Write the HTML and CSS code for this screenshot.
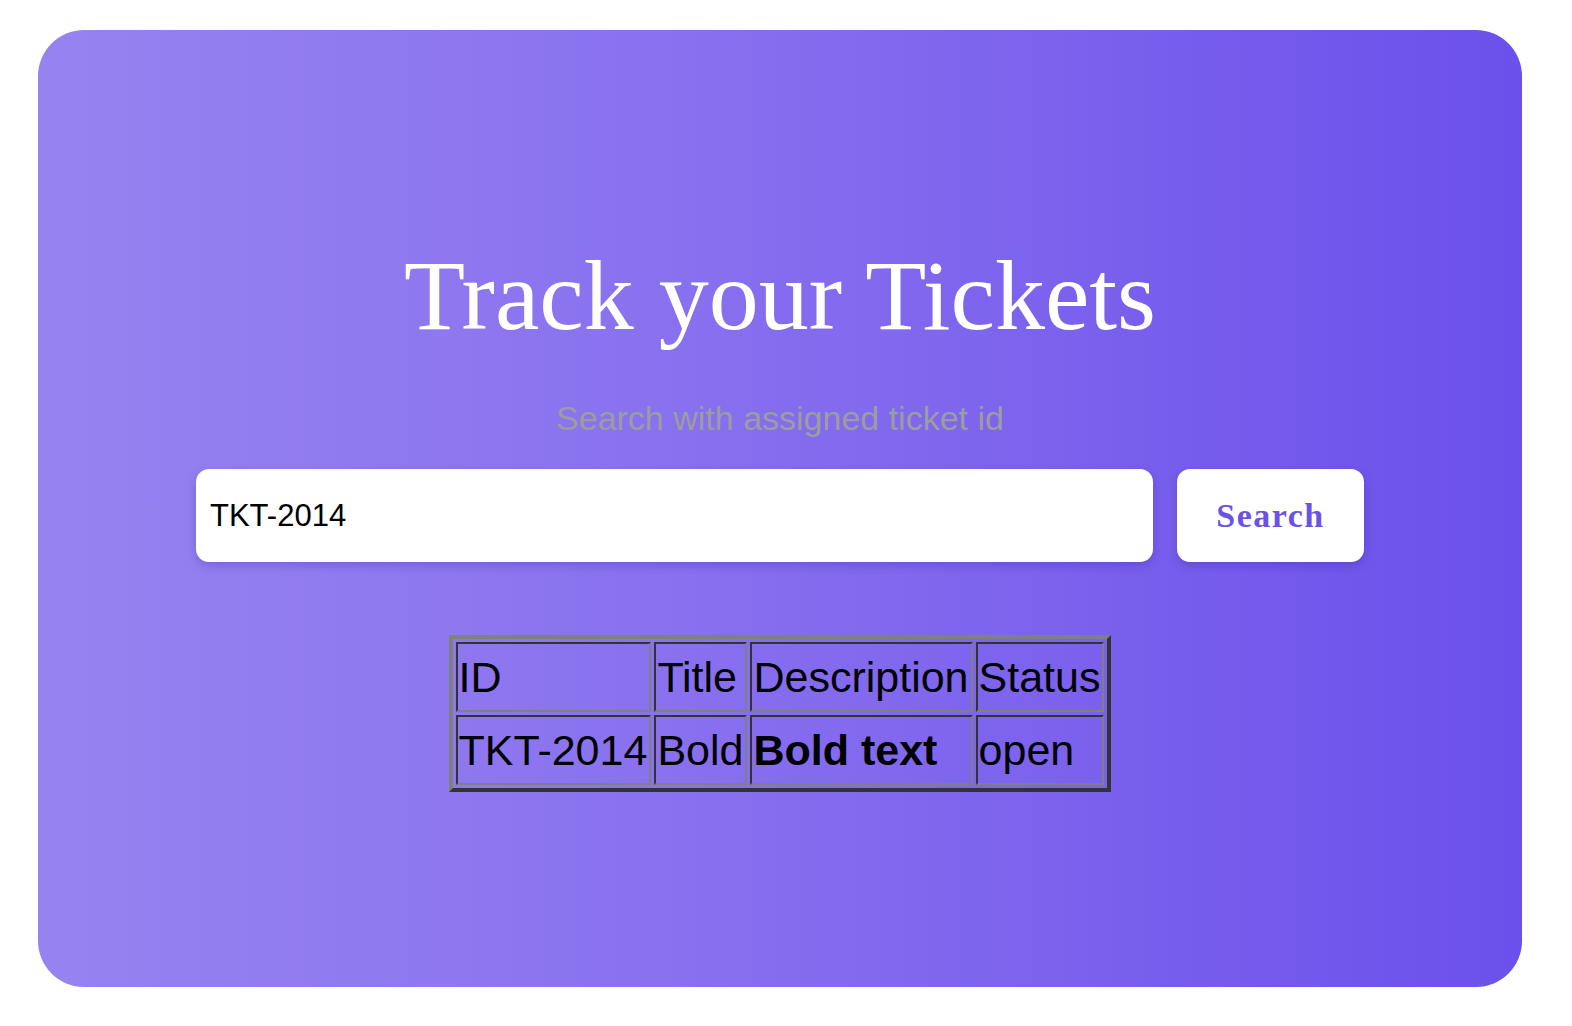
FILE: index.html
```html
<!DOCTYPE html>
<html>
<head>
<meta charset="utf-8">
<title>Track your Tickets</title>
<link rel="stylesheet" href="styles.css">
</head>
<body>
<div class="card">
  <h1 class="title">Track your Tickets</h1>
  <p class="subtitle">Search with assigned ticket id</p>
  <div class="search-row">
    <input class="search-input" type="text" value="TKT-2014">
    <button class="search-btn">Search</button>
  </div>
  <table class="tickets">
    <tr><td>ID</td><td>Title</td><td>Description</td><td>Status</td></tr>
    <tr><td>TKT-2014</td><td>Bold</td><td><b>Bold text</b></td><td>open</td></tr>
  </table>
</div>
</body>
</html>
```
FILE: styles.css
```css
html, body {
  margin: 0;
  padding: 0;
  background: #ffffff;
}
.card {
  margin: 30px 50px 0 38px;
  height: 957px;
  box-sizing: border-box;
  border-radius: 46px;
  background: linear-gradient(90deg, #9783f0 0%, #8a72ef 40%, #6c50eb 100%);
  padding-top: 210px;
  display: flex;
  flex-direction: column;
  align-items: center;
}
.title {
  margin: 0;
  font-family: "Liberation Serif", "Times New Roman", serif;
  font-weight: normal;
  font-size: 100px;
  line-height: 112px;
  color: #ffffff;
}
.subtitle {
  margin: 46px 0 0 0;
  font-family: "Liberation Sans", Arial, sans-serif;
  font-size: 34px;
  line-height: 40px;
  color: #9c9ca3;
}
.search-row {
  margin-top: 31px;
  display: flex;
  gap: 24px;
}
.search-input {
  width: 957px;
  height: 93px;
  box-sizing: border-box;
  border: none;
  outline: none;
  border-radius: 13px;
  background: #ffffff;
  padding: 0 14px;
  font-family: "Liberation Sans", Arial, sans-serif;
  font-size: 31px;
  color: #000000;
  box-shadow: 0 4px 10px rgba(40, 20, 120, 0.22);
}
.search-btn {
  width: 187px;
  height: 93px;
  border: none;
  border-radius: 13px;
  background: #ffffff;
  font-family: "Liberation Serif", "Times New Roman", serif;
  font-weight: bold;
  font-size: 34px;
  letter-spacing: 1.5px;
  color: #6b52e6;
  box-shadow: 0 4px 10px rgba(40, 20, 120, 0.22);
  padding: 0;
}
.tickets {
  margin-top: 73px;
  border: 4px solid;
  border-color: #808080 #333333 #333333 #808080;
  border-spacing: 3px;
  font-family: "Liberation Sans", Arial, sans-serif;
  font-size: 43px;
  color: #000000;
}
.tickets td {
  border: 2px solid;
  border-color: #333333 #808080 #808080 #333333;
  padding: 2px 2px 2px 1px;
  line-height: 62px;
  text-align: left;
}
```
